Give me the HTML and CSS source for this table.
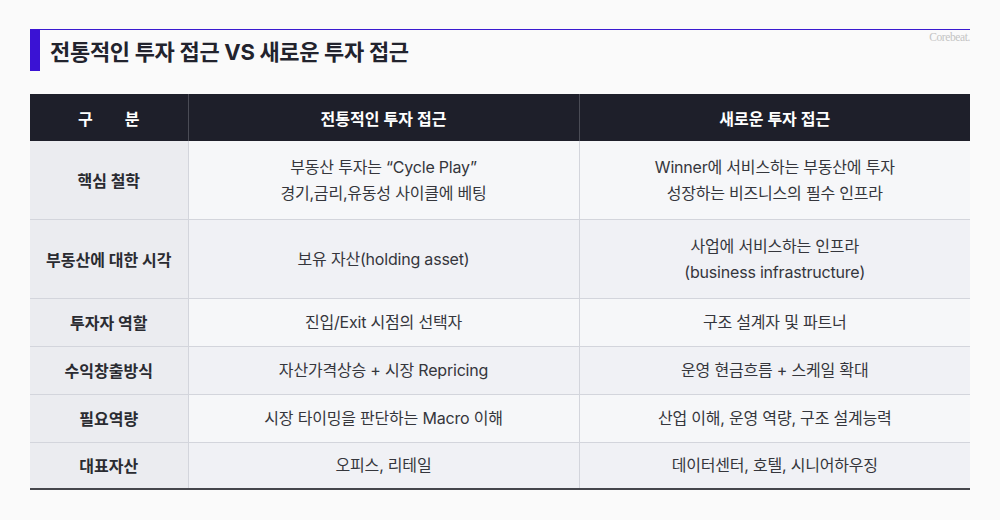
FILE: index.html
```html
<!DOCTYPE html>
<html lang="ko">
<head>
<meta charset="utf-8">
<link rel="stylesheet" href="styles.css">
</head>
<body>
<div class="page">
  <div class="title-row">
    <h1 class="title">전통적인 투자 접근 VS 새로운 투자 접근</h1>
    <span class="brand">Corebeat.</span>
  </div>
  <table class="cmp">
    <colgroup>
      <col class="c1"><col class="c2"><col class="c3">
    </colgroup>
    <thead>
      <tr><th class="gubun">구&emsp;&emsp;분</th><th>전통적인 투자 접근</th><th>새로운 투자 접근</th></tr>
    </thead>
    <tbody>
      <tr class="tall"><th>핵심 철학</th><td>부동산 투자는 “Cycle Play”<br>경기,금리,유동성 사이클에 베팅</td><td>Winner에 서비스하는 부동산에 투자<br>성장하는 비즈니스의 필수 인프라</td></tr>
      <tr class="tall tall2"><th>부동산에 대한 시각</th><td>보유 자산(holding asset)</td><td>사업에 서비스하는 인프라<br>(business infrastructure)</td></tr>
      <tr><th>투자자 역할</th><td>진입/Exit 시점의 선택자</td><td>구조 설계자 및 파트너</td></tr>
      <tr><th>수익창출방식</th><td>자산가격상승 + 시장 Repricing</td><td>운영 현금흐름 + 스케일 확대</td></tr>
      <tr><th>필요역량</th><td>시장 타이밍을 판단하는 Macro 이해</td><td>산업 이해, 운영 역량, 구조 설계능력</td></tr>
      <tr class="last"><th>대표자산</th><td>오피스, 리테일</td><td>데이터센터, 호텔, 시니어하우징</td></tr>
    </tbody>
  </table>
</div>
</body>
</html>
```

FILE: styles.css
```css
* { box-sizing: border-box; }
html, body {
  margin: 0;
  padding: 0;
  background: #fafafa;
  width: 1000px;
  height: 520px;
  overflow: hidden;
}
body {
  font-family: "Inter", "Noto Sans CJK KR", "Noto Sans", sans-serif;
  color: #2b2c33;
}
.page {
  padding: 29px 30px 0 30px;
}
.title-row {
  position: relative;
  border-top: 1px solid #3a1ad0;
  height: 41px;
  display: flex;
  align-items: center;
}
.title-row::before {
  content: "";
  position: absolute;
  left: 0;
  top: -1px;
  width: 10px;
  height: 42px;
  background: #3a12d4;
}
.title {
  margin: 0 0 0 20px;
  font-size: 22px;
  font-weight: 700;
  color: #22232d;
  letter-spacing: -0.3px;
}
.brand {
  position: absolute;
  right: 0;
  top: 1px;
  font-family: "Liberation Serif", serif;
  font-size: 11.5px;
  color: #c4c4c4;
  letter-spacing: -0.4px;
}
.cmp {
  margin-top: 24px;
  width: 940px;
  border-collapse: collapse;
  table-layout: fixed;
  font-size: 16px;
}
.c1 { width: 158px; }
.c2 { width: 391px; }
.c3 { width: 391px; }
.cmp thead th {
  background: #1e1f2a;
  color: #ffffff;
  font-weight: 600;
  height: 47px;
  padding: 0;
  text-align: center;
  border-left: 1px solid #4a4b55;
}
.cmp thead th:first-child { border-left: none; }
.cmp thead th.gubun { white-space: pre; }
.cmp tbody tr {
  height: 48px;
  border-top: 1px solid #d3d5dc;
}
.cmp tbody tr:first-child { border-top: none; }
.cmp tbody tr.tall { height: 78px; }
.cmp tbody tr.tall2 { height: 79px; }
.cmp tbody tr.last { height: 47px; border-bottom: 2px solid #45464c; }
.cmp tbody th {
  background: #ebecf0;
  font-weight: 700;
  color: #2a2b31;
  text-align: center;
  padding: 0;
}
.cmp tbody td {
  text-align: center;
  color: #35363c;
  line-height: 26px;
  padding: 0;
  border-left: 1px solid #d3d5dc;
  letter-spacing: -0.2px;
}
.cmp tbody tr:nth-child(odd) td { background: #f6f7f9; }
.cmp tbody tr:nth-child(even) td { background: #f0f1f5; }
```
